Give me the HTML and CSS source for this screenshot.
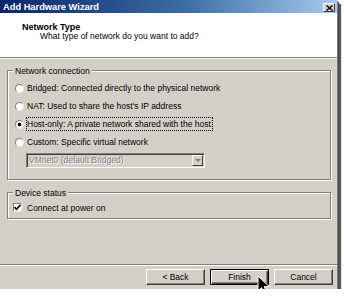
FILE: index.html
```html
<!DOCTYPE html>
<html lang="en">
<head>
    <meta charset="UTF-8">
    <meta name="viewport" content="width=device-width, initial-scale=1.0">
    <title>Add Hardware Wizard</title>
    <link rel="stylesheet" href="styles.css">
</head>
<body>
    <div class="window">
        <div class="titlebar">
            <span class="title">Add Hardware Wizard</span>
            <span class="close">
                <svg width="7" height="6" viewBox="0 0 7 6"><path d="M0.5 0.5 L6.5 5.5 M6.5 0.5 L0.5 5.5" stroke="#000" stroke-width="1.4"/></svg>
            </span>
        </div>

        <div class="header">
            <div class="heading">Network Type</div>
            <div class="subheading">What type of network do you want to add?</div>
        </div>

        <div class="content">
            <div class="group">
                <div class="group-title">Network connection</div>
                <div class="option"><span class="radio"></span>Bridged: Connected directly to the physical network</div>
                <div class="option"><span class="radio"></span>NAT: Used to share the host's IP address</div>
                <div class="option"><span class="radio checked"></span><span class="focus">Host-only: A private network shared with the host</span></div>
                <div class="option"><span class="radio"></span>Custom: Specific virtual network</div>
                <div class="select">
                    <span class="select-text">VMnet0 (default Bridged)</span>
                    <span class="select-btn"><span class="triangle"></span></span>
                </div>
            </div>

            <div class="group second">
                <div class="group-title">Device status</div>
                <div class="option short">
                    <span class="check">
                        <svg width="7" height="7" viewBox="0 0 7 7"><path d="M0.5 3 L2.5 5.3 L6.5 0.8" fill="none" stroke="#000" stroke-width="1.6"/></svg>
                    </span>Connect at power on
                </div>
            </div>
        </div>

        <div class="footer">
            <button class="btn">&lt; Back</button>
            <button class="btn default">Finish</button>
            <button class="btn">Cancel</button>
        </div>

        <!-- mouse pointer over the Finish button -->
        <svg class="cursor" width="14" height="21" viewBox="0 0 14 21">
            <path d="M1 1 L1 16 L4.6 12.6 L7.4 19.4 L10 18.2 L7.3 11.6 L12.2 11.6 Z" fill="#000" stroke="#fff" stroke-width="1"/>
        </svg>
    </div>
</body>
</html>
```

FILE: styles.css
```css
body {
    margin: 0;
    background-color: #fff;
    font-family: "Liberation Sans", Arial, sans-serif;
    font-size: 8.5px;
    color: #000;
}

.window {
    position: relative;
    width: 337px;
    height: 289px;
    background-color: #d4d0c8;
    display: flex;
    flex-direction: column;
    box-shadow: 1px 1px 0 #808080, 2px 2px 0 #404040, 4px 4px 1px rgba(0, 0, 0, 0.65);
}

.titlebar {
    flex: none;
    height: 13px;
    display: flex;
    justify-content: space-between;
    align-items: flex-start;
    background: linear-gradient(to right, #0a246a, #3a6ea5 55%, #a6caf0);
}

.title {
    color: #fff;
    font-weight: bold;
    font-size: 9.3px;
    line-height: 11px;
    padding: 2px 0 0 3px;
}

.close {
    width: 12px;
    height: 9px;
    margin: 3px 2px 0 0;
    box-sizing: border-box;
    background-color: #d4d0c8;
    border: 1px solid;
    border-color: #fff #404040 #404040 #fff;
    display: flex;
    align-items: center;
    justify-content: center;
}

.header {
    flex: none;
    height: 45px;
    box-sizing: border-box;
    padding: 10px 0 0 22px;
    background-color: #fff;
    border-bottom: 1px solid #808080;
    box-shadow: 0 1px 0 #fff;
}

.heading {
    font-weight: bold;
    font-size: 9px;
    line-height: 9px;
}

.subheading {
    line-height: 9px;
    padding-left: 18px;
}

.content {
    flex: 1;
    padding: 12px 6px 0 7px;
}

.group {
    border: 1px solid #808080;
    box-shadow: 1px 1px 0 #fff, inset 1px 1px 0 #fff;
    padding: 0 6px 11px 7px;
}

.group.second {
    margin-top: 12px;
    padding-bottom: 4px;
}

.group-title {
    width: fit-content;
    margin: -5px 0 3px -2px;
    padding: 0 2px;
    line-height: 10px;
    background-color: #d4d0c8;
}

.option {
    display: flex;
    align-items: center;
    height: 18px;
    white-space: nowrap;
}

.option.short {
    height: 13px;
}

.radio {
    flex: none;
    width: 9px;
    height: 9px;
    margin-right: 3px;
    box-sizing: border-box;
    border-radius: 50%;
    background-color: #fff;
    border: 1px solid;
    border-color: #808080 #e8e8e8 #e8e8e8 #808080;
}

.radio.checked {
    background: radial-gradient(circle, #000 0 1.6px, #fff 2.2px);
}

.focus {
    outline: 1px dotted #000;
    padding: 1px 1px 1px 0;
}

.check {
    flex: none;
    width: 9px;
    height: 9px;
    margin: 0 5px 0 -2px;
    box-sizing: border-box;
    background-color: #fff;
    border: 1px solid;
    border-color: #808080 #e8e8e8 #e8e8e8 #808080;
    display: flex;
    align-items: center;
    justify-content: center;
}

.select {
    display: flex;
    align-items: stretch;
    width: 179px;
    height: 15px;
    margin: 2px 0 0 11px;
    box-sizing: border-box;
    padding: 1px;
    border: 1px solid;
    border-color: #808080 #fff #fff #808080;
    box-shadow: inset 1px 1px 0 #404040;
    background-color: #d4d0c8;
}

.select-text {
    flex: 1;
    padding-left: 1px;
    line-height: 11px;
    color: #808080;
    text-shadow: 1px 1px 0 #fff;
}

.select-btn {
    width: 11px;
    box-sizing: border-box;
    border: 1px solid;
    border-color: #fff #404040 #404040 #fff;
    display: flex;
    align-items: center;
    justify-content: center;
}

.triangle {
    border-left: 3px solid transparent;
    border-right: 3px solid transparent;
    border-top: 3px solid #808080;
}

.footer {
    flex: none;
    display: flex;
    justify-content: flex-end;
    gap: 5px;
    padding: 4px 4px 4px 0;
    border-top: 1px solid #808080;
    box-shadow: inset 0 1px 0 #fff;
}

.btn {
    width: 59px;
    height: 16px;
    padding: 0;
    font-family: "Liberation Sans", Arial, sans-serif;
    font-size: 8.5px;
    color: #000;
    background-color: #d4d0c8;
    border: 1px solid;
    border-color: #fff #404040 #404040 #fff;
    box-shadow: inset -1px -1px 0 #808080;
}

.btn.default {
    border-color: #000;
    box-shadow: inset 1px 1px 0 #fff, inset -1px -1px 0 #404040, inset -2px -2px 0 #808080;
}

.cursor {
    position: absolute;
    left: 257px;
    top: 275px;
}
```
